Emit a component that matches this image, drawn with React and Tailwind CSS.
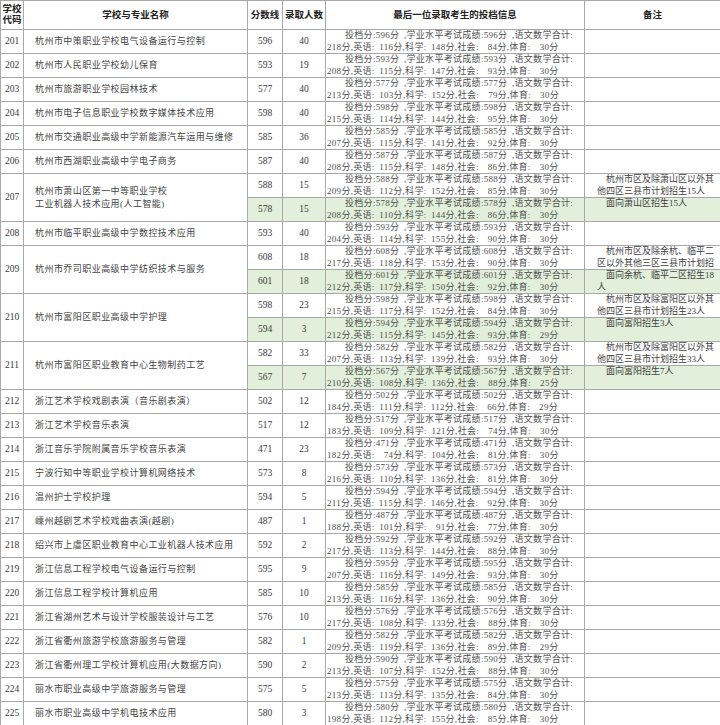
import React from "react";

const rows = [
  { code: "201", name: ["杭州市中策职业学校电气设备运行与控制"], subs: [{ score: 596, n: 40, s: [218, 116, 148, 84, 30] }] },
  { code: "202", name: ["杭州市人民职业学校幼儿保育"], subs: [{ score: 593, n: 19, s: [208, 115, 147, 93, 30] }] },
  { code: "203", name: ["杭州市旅游职业学校园林技术"], subs: [{ score: 577, n: 40, s: [213, 103, 152, 79, 30] }] },
  { code: "204", name: ["杭州市电子信息职业学校数字媒体技术应用"], subs: [{ score: 598, n: 40, s: [215, 114, 144, 95, 30] }] },
  { code: "205", name: ["杭州市交通职业高级中学新能源汽车运用与维修"], subs: [{ score: 585, n: 36, s: [207, 115, 141, 92, 30] }] },
  { code: "206", name: ["杭州市西湖职业高级中学电子商务"], subs: [{ score: 587, n: 40, s: [208, 115, 148, 86, 30] }] },
  {
    code: "207",
    name: ["杭州市萧山区第一中等职业学校", "工业机器人技术应用(人工智能)"],
    subs: [
      { score: 588, n: 15, s: [209, 112, 152, 85, 30], remark: ["杭州市区及除萧山区以外其", "他四区三县市计划招生15人"] },
      { score: 578, n: 15, s: [208, 110, 144, 86, 30], remark: ["面向萧山区招生15人"] },
    ],
  },
  { code: "208", name: ["杭州市临平职业高级中学数控技术应用"], subs: [{ score: 593, n: 40, s: [204, 114, 155, 90, 30] }] },
  {
    code: "209",
    name: ["杭州市乔司职业高级中学纺织技术与服务"],
    subs: [
      { score: 608, n: 18, s: [217, 118, 153, 90, 30], remark: ["杭州市区及除余杭、临平二", "区以外其他三区三县市计划招"] },
      { score: 601, n: 18, s: [212, 117, 150, 92, 30], remark: ["面向余杭、临平二区招生18", "人"] },
    ],
  },
  {
    code: "210",
    name: ["杭州市富阳区职业高级中学护理"],
    subs: [
      { score: 598, n: 23, s: [215, 117, 152, 84, 30], remark: ["杭州市区及除富阳区以外其", "他四区三县市计划招生23人"] },
      { score: 594, n: 3, s: [212, 115, 145, 93, 29], remark: ["面向富阳招生3人"] },
    ],
  },
  {
    code: "211",
    name: ["杭州市富阳区职业教育中心生物制药工艺"],
    subs: [
      { score: 582, n: 33, s: [207, 113, 139, 93, 30], remark: ["杭州市区及除富阳区以外其", "他四区三县市计划招生33人"] },
      { score: 567, n: 7, s: [210, 108, 136, 88, 25], remark: ["面向富阳招生7人"] },
    ],
  },
  { code: "212", name: ["浙江艺术学校戏剧表演（音乐剧表演）"], subs: [{ score: 502, n: 12, s: [184, 111, 112, 66, 29] }] },
  { code: "213", name: ["浙江艺术学校音乐表演"], subs: [{ score: 517, n: 12, s: [183, 109, 121, 74, 30] }] },
  { code: "214", name: ["浙江音乐学院附属音乐学校音乐表演"], subs: [{ score: 471, n: 23, s: [182, 74, 104, 81, 30] }] },
  { code: "215", name: ["宁波行知中等职业学校计算机网络技术"], subs: [{ score: 573, n: 8, s: [216, 110, 136, 81, 30] }] },
  { code: "216", name: ["温州护士学校护理"], subs: [{ score: 594, n: 5, s: [211, 115, 146, 92, 30] }] },
  { code: "217", name: ["嵊州越剧艺术学校戏曲表演(越剧)"], subs: [{ score: 487, n: 1, s: [188, 101, 91, 77, 30] }] },
  { code: "218", name: ["绍兴市上虞区职业教育中心工业机器人技术应用"], subs: [{ score: 592, n: 2, s: [217, 113, 144, 88, 30] }] },
  { code: "219", name: ["浙江信息工程学校电气设备运行与控制"], subs: [{ score: 595, n: 9, s: [207, 116, 149, 93, 30] }] },
  { code: "220", name: ["浙江信息工程学校计算机应用"], subs: [{ score: 585, n: 10, s: [213, 116, 136, 90, 30] }] },
  { code: "221", name: ["浙江省湖州艺术与设计学校服装设计与工艺"], subs: [{ score: 576, n: 10, s: [217, 108, 133, 88, 30] }] },
  { code: "222", name: ["浙江省衢州旅游学校旅游服务与管理"], subs: [{ score: 582, n: 1, s: [209, 119, 136, 89, 29] }] },
  { code: "223", name: ["浙江省衢州理工学校计算机应用(大数据方向)"], subs: [{ score: 590, n: 2, s: [213, 107, 152, 88, 30] }] },
  { code: "224", name: ["丽水市职业高级中学旅游服务与管理"], subs: [{ score: 575, n: 5, s: [213, 113, 135, 84, 30] }] },
  { code: "225", name: ["丽水市职业高级中学机电技术应用"], subs: [{ score: 580, n: 3, s: [198, 112, 155, 85, 30] }] },
];

const pad = (v) => String(v).padStart(4, " ");

function Info({ score, s }) {
  const [yw, en, sc, so, pe] = s;
  return (
    <div className="h-[23px] overflow-hidden whitespace-pre text-[9px] leading-[11.5px] tracking-[0.3px] [word-spacing:2px] text-[#505050]">
      <div className="pl-[18px]">{`投档分:${score}分 ,学业水平考试成绩:${score}分 ,语文数学合计:`}</div>
      <div>{`${yw}分,英语:${pad(en)}分,科学:${pad(sc)}分,社会:${pad(so)}分,体育:${pad(pe)}分`}</div>
    </div>
  );
}

function Remark({ lines }) {
  if (!lines) return null;
  return (
    <div className="h-[23px] overflow-hidden whitespace-pre pl-[12px] text-[9px] leading-[11.5px] text-[#404040]">
      {lines.map((l, i) => (
        <div key={i} className={i === 0 ? "pl-[9px]" : ""}>
          {l}
        </div>
      ))}
    </div>
  );
}

const cell = "border border-[#a8a8a8] p-0 align-middle";

export default function App() {
  return (
    <div className="w-[720px] bg-white text-[#3a3a3a] [font-family:'Liberation_Serif','Noto_Sans_CJK_SC',serif]">
      <table className="w-[720px] table-fixed border-collapse">
        <colgroup>
          <col className="w-[23px]" />
          <col className="w-[224px]" />
          <col className="w-[35px]" />
          <col className="w-[43px]" />
          <col className="w-[259px]" />
          <col className="w-[136px]" />
        </colgroup>
        <thead>
          <tr className="h-[29px] text-[9.5px] text-[#222]">
            <th className={`${cell} leading-[11px] font-bold`}>
              <div>学校</div>
              <div>代码</div>
            </th>
            <th className={`${cell} font-bold`}>学校与专业名称</th>
            <th className={`${cell} font-bold`}>分数线</th>
            <th className={`${cell} font-bold`}>录取人数</th>
            <th className={`${cell} font-bold`}>最后一位录取考生的投档信息</th>
            <th className={`${cell} font-bold`}>备注</th>
          </tr>
        </thead>
        <tbody>
          {rows.map((r) =>
            r.subs.map((sub, i) => {
              const green = i === 1 ? "bg-[#e2efda]" : "";
              return (
                <tr key={r.code + i} className="h-[24px]">
                  {i === 0 && (
                    <>
                      <td rowSpan={r.subs.length} className={`${cell} text-center text-[9.5px]`}>
                        {r.code}
                      </td>
                      <td rowSpan={r.subs.length} className={`${cell} pl-[11px] text-[9px] leading-[12.5px] tracking-[0.45px] text-[#444]`}>
                        {r.name.map((l, k) => (
                          <div key={k}>{l}</div>
                        ))}
                      </td>
                    </>
                  )}
                  <td className={`${cell} ${green} text-center text-[9.5px]`}>{sub.score}</td>
                  <td className={`${cell} ${green} text-center text-[9.5px]`}>{sub.n}</td>
                  <td className={`${cell} ${green} pl-[1px]`}>
                    <Info score={sub.score} s={sub.s} />
                  </td>
                  <td className={`${cell} ${green}`}>
                    <Remark lines={sub.remark} />
                  </td>
                </tr>
              );
            })
          )}
        </tbody>
      </table>
    </div>
  );
}
